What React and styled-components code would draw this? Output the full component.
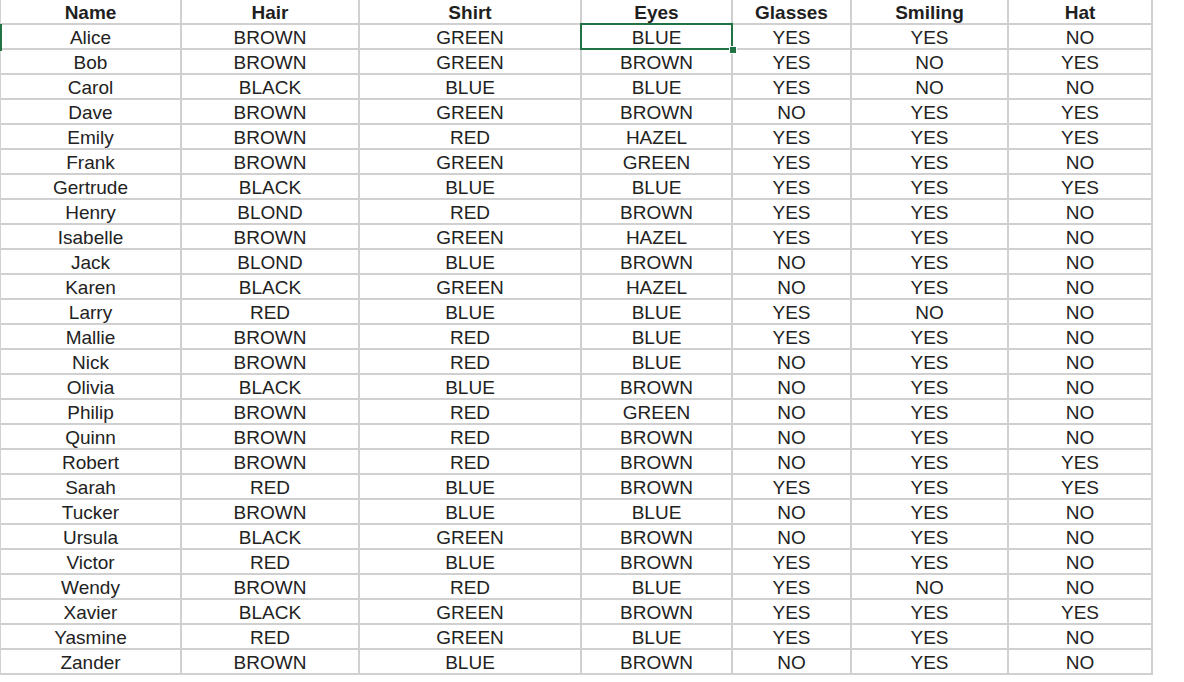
import React from "react";
import styled, { createGlobalStyle, css } from "styled-components";

const Global = createGlobalStyle`
  html, body { margin: 0; padding: 0; background: #ffffff; }
  body { font-family: "Liberation Sans", Arial, sans-serif; }
`;

const COLS = [181, 178, 222, 151, 119, 157, 144];

const Sheet = styled.div`
  display: grid;
  grid-template-columns: ${COLS.map((c) => `${c}px`).join(" ")};
  grid-auto-rows: 25px;
  width: ${COLS.reduce((a, b) => a + b, 0) + 1}px;
  border-left: 1px solid #d2d2d2;
  box-sizing: border-box;
`;

const Cell = styled.div`
  position: relative;
  box-sizing: border-box;
  border-right: 2px solid #d0d0d0;
  border-bottom: 2px solid #d0d0d0;
  display: flex;
  align-items: center;
  justify-content: center;
  font-size: 19px;
  color: #222222;
  line-height: 1;
  padding-top: 1px;
  white-space: nowrap;
  ${(p) =>
    p.$header &&
    css`
      font-weight: bold;
      color: #1f1f1f;
      padding-top: 1px;
    `}
  ${(p) =>
    p.$rowMark &&
    css`
      &::before {
        content: "";
        position: absolute;
        left: -1px;
        top: -1px;
        width: 2px;
        height: 27px;
        background: #217346;
      }
    `}
  ${(p) =>
    p.$selected &&
    css`
      &::after {
        content: "";
        position: absolute;
        left: -2px;
        top: -2px;
        right: -2px;
        bottom: -2px;
        border: 2px solid #217346;
        pointer-events: none;
      }
    `}
`;

const FillHandle = styled.span`
  position: absolute;
  right: -6px;
  bottom: -6px;
  width: 6px;
  height: 6px;
  background: #217346;
  border: 1px solid #ffffff;
  z-index: 2;
`;

const HEADERS = ["Name", "Hair", "Shirt", "Eyes", "Glasses", "Smiling", "Hat"];

const DATA = `Alice BROWN GREEN BLUE YES YES NO
Bob BROWN GREEN BROWN YES NO YES
Carol BLACK BLUE BLUE YES NO NO
Dave BROWN GREEN BROWN NO YES YES
Emily BROWN RED HAZEL YES YES YES
Frank BROWN GREEN GREEN YES YES NO
Gertrude BLACK BLUE BLUE YES YES YES
Henry BLOND RED BROWN YES YES NO
Isabelle BROWN GREEN HAZEL YES YES NO
Jack BLOND BLUE BROWN NO YES NO
Karen BLACK GREEN HAZEL NO YES NO
Larry RED BLUE BLUE YES NO NO
Mallie BROWN RED BLUE YES YES NO
Nick BROWN RED BLUE NO YES NO
Olivia BLACK BLUE BROWN NO YES NO
Philip BROWN RED GREEN NO YES NO
Quinn BROWN RED BROWN NO YES NO
Robert BROWN RED BROWN NO YES YES
Sarah RED BLUE BROWN YES YES YES
Tucker BROWN BLUE BLUE NO YES NO
Ursula BLACK GREEN BROWN NO YES NO
Victor RED BLUE BROWN YES YES NO
Wendy BROWN RED BLUE YES NO NO
Xavier BLACK GREEN BROWN YES YES YES
Yasmine RED GREEN BLUE YES YES NO
Zander BROWN BLUE BROWN NO YES NO`
  .split("\n")
  .map((l) => l.trim().split(" "));

export default function App() {
  return (
    <>
      <Global />
      <Sheet>
        {HEADERS.map((h) => (
          <Cell key={h} $header>
            {h}
          </Cell>
        ))}
        {DATA.map((row, r) =>
          row.map((v, c) => {
            const selected = r === 0 && c === 3;
            return (
              <Cell
                key={`${r}-${c}`}
                $selected={selected}
                $rowMark={r === 0 && c === 0}
              >
                {v}
                {selected && <FillHandle />}
              </Cell>
            );
          })
        )}
      </Sheet>
    </>
  );
}
